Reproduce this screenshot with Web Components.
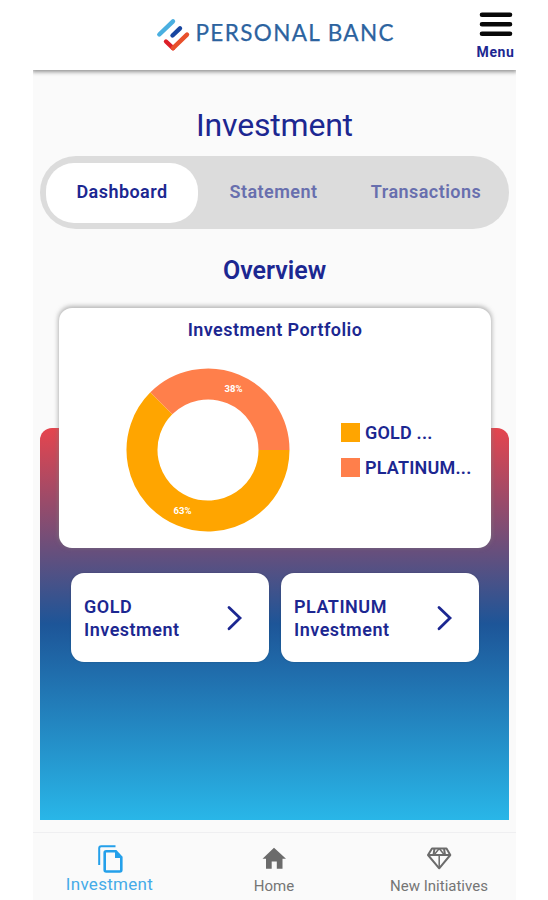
<!DOCTYPE html>
<html lang="en"><head><meta charset="utf-8"><title>Personal Banc</title>
<style>body{margin:0;background:#fff;font-family:Roboto,"Liberation Sans",sans-serif;color:#1c2791}</style></head>
<body>
<banc-app></banc-app>
<script>
const define=(name,html)=>customElements.define(name,class extends HTMLElement{
  constructor(){super();const t=document.createElement('template');t.innerHTML=html;
  this.attachShadow({mode:'open'}).append(t.content.cloneNode(true));}
});
define('banc-header',`<style>
:host{display:flex;box-sizing:border-box;height:70px;background:#fff;box-shadow:0 1px 4px 1px rgba(0,0,0,.42);clip-path:inset(0 0 -9px 0);justify-content:flex-end;position:relative;z-index:1}
.logo{flex:none;margin-right:79px;display:block}
.menu{width:41px;display:flex;flex-direction:column;align-items:center;padding-top:12px;flex:none}
.menu span{font-size:14px;line-height:16px;font-weight:700;letter-spacing:.6px;margin-top:6px;white-space:nowrap}
svg{display:block;flex:none}
</style>
<svg class="logo" width="244" height="70" viewBox="152 0 244 70" fill="none" stroke-linecap="round">
<path d="M159.300 34.500 173 21.300" stroke="#4aafe0" stroke-width="4.400"/>
<path d="M172.500 35.500 180 28.300" stroke="#1846a0" stroke-width="4.400"/>
<path d="M166 41.500 173 48.200" stroke="#dc1f28" stroke-width="4.400"/>
<path d="M173 48.200 187 34.600" stroke="#e8502b" stroke-width="4.400"/>
<text x="195.500" y="41.300" font-family="Lato,sans-serif" font-size="22.500" fill="#2c639f" stroke="#2c639f" stroke-width=".25" textLength="198" lengthAdjust="spacing">PERSONAL BANC</text></svg>
<div class="menu"><svg width="34" height="26" viewBox="0 0 34 26" stroke="#080808" stroke-width="4.600" stroke-linecap="round"><path d="M3 2.700H31M3 12.200H31M3 21.700H31"/></svg><span>Menu</span></div>`);
define('banc-tab',`<style>:host{display:flex;align-items:center;justify-content:center;height:60px;border-radius:28px;font-size:18px;font-weight:600;letter-spacing:.45px;color:#686fae;padding-bottom:3px;box-sizing:border-box}
:host([selected]){background:#fff;color:#1c2791}</style><slot></slot>`);
define('banc-tabs',`<style>:host{display:grid;grid-template-columns:152px 1fr 154px;box-sizing:border-box;height:73px;padding:7px 6px;border-radius:36px;background:#dcdcdc}</style><slot></slot>`);
define('donut-chart',`<style>:host{display:block;width:166px;height:166px}svg{display:block}</style>
<svg width="166" height="166" viewBox="125 367 166 166"><g fill="none" stroke-width="31">
<path d="M274 450A66 66 0 1 1 161.330 403.330" stroke="#ffa500"/>
<path d="M161.330 403.330A66 66 0 0 1 274 450" stroke="#ff7f4b"/></g>
<g font-family="Roboto,sans-serif" font-size="9.500" font-weight="700" fill="#fff" text-anchor="middle"><text x="233.500" y="392.200">38%</text><text x="182.500" y="514.200">63%</text></g></svg>`);
define('legend-item',`<style>:host{display:flex;align-items:center;height:19px;gap:5px;font-size:18px;font-weight:600;white-space:nowrap;letter-spacing:.2px}i{width:19px;height:19px;background:var(--swatch)}</style><i></i><span><slot></slot></span>`);
define('portfolio-card',`<style>:host{display:block;box-sizing:border-box;background:#fff;border-radius:13px;box-shadow:0 -1px 4px 1px rgba(125,125,125,.55);height:240px;padding-top:11px}
h3{margin:0;text-align:center;font-size:18px;line-height:22px;font-weight:600;letter-spacing:.45px}
.body{display:flex;padding:26px 0 0 66px}.legend{display:grid;gap:16px;align-content:start;padding:56px 0 0 50px}</style>
<h3><slot name="title"></slot></h3><div class="body"><donut-chart></donut-chart><div class="legend"><slot></slot></div></div>`);
define('invest-link',`<style>:host{display:flex;box-sizing:border-box;width:198px;height:89px;background:#fff;border-radius:13px;align-items:center;justify-content:space-between;padding:0 25px 0 13px;font-size:18px;line-height:23px;font-weight:600;letter-spacing:.5px;box-shadow:0 0 2px rgba(0,0,0,.2)}svg{display:block}</style>
<div><slot></slot></div><svg width="18" height="28" viewBox="0 0 18 28" fill="none" stroke="#1c2791" stroke-width="2.800" stroke-linecap="round"><path d="M3 3.500 14 14 3 24.800"/></svg>`);
define('nav-item',`<style>:host{display:flex;flex-direction:column;align-items:center;color:#757575;font-size:15px;line-height:18px;white-space:nowrap}
:host([active]){color:#45abe8;font-size:17px;letter-spacing:.3px;line-height:16px}::slotted(svg){display:block}</style><slot name="icon"></slot><slot></slot>`);
define('banc-nav',`<style>:host{display:grid;grid-template-columns:153px 176px 154px;box-sizing:border-box;height:68px;border-top:1px solid #efeff1;background:#fafafa;padding-top:10px}svg{display:block}</style>
<nav-item active><svg slot="icon" width="32" height="33" viewBox="93 843 32 33" fill="none" stroke="#24a0ea"><path d="M98.200 865V848.300Q98.200 846.200 100.300 846.200H114.500" stroke-width="2"/><path d="M105.200 851.200H114.800L120.300 857.200V870Q120.300 871.500 118.800 871.500H105.200Q103.700 871.500 103.700 870V852.700Q103.700 851.200 105.200 851.200Z" stroke-width="2.600"/><path d="M114 851V858H121Z" fill="#24a0ea" stroke="none"/></svg>Investment</nav-item>
<nav-item><svg slot="icon" width="32" height="34" viewBox="258 843 32 34"><path d="M274 847.800 262.500 858.800H266V868.800H271.700V861.500H276.800V868.800H282.500V858.800H286Z" fill="#6b6b6b"/></svg>Home</nav-item>
<nav-item><svg slot="icon" width="32" height="34" viewBox="423 843 32 34" fill="none" stroke="#6b6b6b" stroke-width="2" stroke-linejoin="round"><path d="M432 848.500H446.500L450.300 855 439.200 868.300 428 855ZM428 855H450.300M434.500 848.500 433.500 855M444 848.500 445 855" /><path d="M439.200 848.500 434 855M439.200 848.500 444.500 855M439.200 855V868" stroke-width="1.500"/></svg>New Initiatives</nav-item>`);
define('banc-app',`<style>:host{display:flex;flex-direction:column;box-sizing:border-box;width:483px;height:900px;margin-left:33px;background:#fafafa}
main{height:762px;padding:0 7px;display:flex;flex-direction:column}
h1{margin:36px 0 0;height:50px;line-height:39px;text-align:center;font-weight:400;font-size:32px;letter-spacing:-.2px}
h2{margin:25px 0 0;height:54px;line-height:33px;text-align:center;font-weight:600;font-size:25px}
.stack{display:grid;height:512px}.panel,.content{grid-area:1/1}
.panel{margin-top:120px;border-radius:12px 12px 0 0;background:linear-gradient(#e5454e,#1d5598 50%,#29b6e8)}
.content{padding:0 18px 0 19px}.links{display:flex;gap:12px;padding:25px 0 0 12px}</style>
<banc-header></banc-header><main><h1>Investment</h1>
<banc-tabs><banc-tab selected>Dashboard</banc-tab><banc-tab>Statement</banc-tab><banc-tab>Transactions</banc-tab></banc-tabs>
<h2>Overview</h2><div class="stack"><div class="panel"></div><div class="content">
<portfolio-card><span slot="title">Investment Portfolio</span><legend-item style="--swatch:#ffa500">GOLD ...</legend-item><legend-item style="--swatch:#ff7f4b">PLATINUM...</legend-item></portfolio-card>
<div class="links"><invest-link>GOLD<br>Investment</invest-link><invest-link>PLATINUM<br>Investment</invest-link></div></div></div></main><banc-nav></banc-nav>`);
</script></body></html>
